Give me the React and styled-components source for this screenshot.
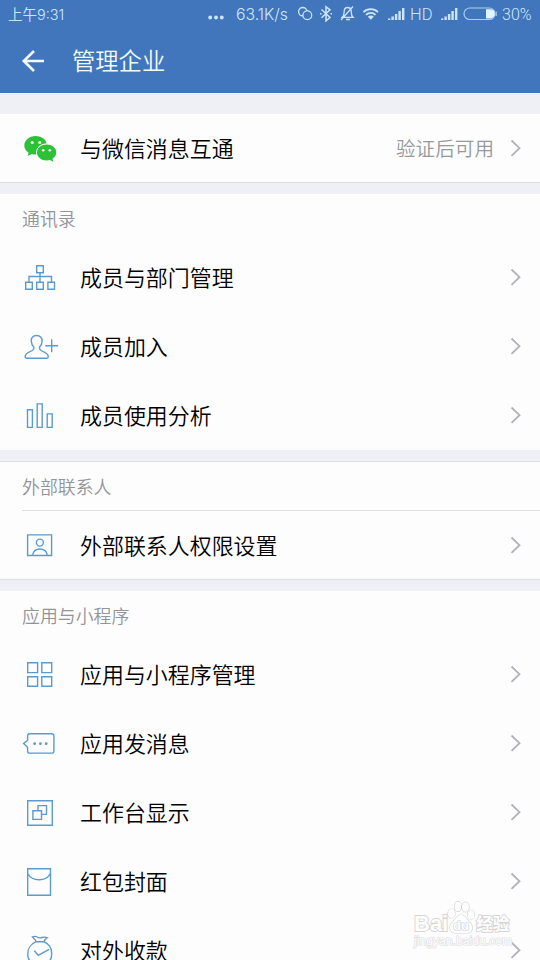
import React from 'react';
import styled, { createGlobalStyle } from 'styled-components';

const GlobalStyle = createGlobalStyle`
    * {
        box-sizing: border-box;
    }

    body {
        margin: 0;
        background: #eff0f5;
        font-family: 'Noto Sans CJK SC', sans-serif;
    }
`;

const Page = styled.div`
    position: relative;
    width: 540px;
    height: 960px;
    overflow: hidden;
    background: #eff0f5;
`;

const Header = styled.header`
    height: 93px;
    background: #4276bc;
`;

const StatusBar = styled.div`
    height: 28px;
    padding: 0 8px;
    display: flex;
    align-items: center;
    justify-content: space-between;
    color: #cbe6fb;
`;

const StatusText = styled.span`
    width: ${({ $width }) => $width}px;
    padding-left: ${({ $indent }) => $indent || 0}px;
    font-family: ${({ $font }) => $font || 'Roboto'}, 'Noto Sans CJK SC', sans-serif;
    font-size: ${({ $size }) => $size || 16}px;
    font-weight: 350;
    line-height: 29px;
    white-space: nowrap;
`;

const StatusIcons = styled.svg`
    display: block;
    flex: none;
`;

const StatusRight = styled.div`
    display: flex;
    align-items: center;
`;

const TitleBar = styled.div`
    height: 65px;
    padding-left: 20px;
    display: flex;
    align-items: center;
    color: #f2fbff;
`;

const Title = styled.h1`
    margin: 0 0 0 26px;
    font-size: 23.3px;
    font-weight: 350;
    line-height: 61px;
`;

const Section = styled.section`
    margin-top: ${({ $gap }) => $gap}px;
    background: #fdfdfe;
    box-shadow: ${({ $topLine }) => ($topLine ? '0 -1px 0 #dfe1e6' : 'none')};
`;

const SectionTitle = styled.h2`
    height: 49px;
    margin: 0 0 0 22px;
    border-bottom: 1px solid ${({ $line }) => ($line ? '#dcdde1' : 'transparent')};
    color: #929499;
    font-size: 17.9px;
    font-weight: 350;
    line-height: 49px;
`;

const RowWrapper = styled.div`
    height: 69px;
    padding: 0 16px 0 20px;
    display: flex;
    align-items: center;
    border-bottom: 1px solid ${({ $line }) => ($line ? '#dcdee3' : 'transparent')};
`;

const RowIcon = styled.svg`
    flex: none;
    margin-top: 1px;
    fill: none;
    stroke: #5b9bcf;
    stroke-width: 1.4;
`;

const RowLabel = styled.div`
    margin-left: 20px;
    color: #000;
    font-size: 21.95px;
    font-weight: 350;
    line-height: 64px;
    white-space: nowrap;
`;

const RowValue = styled.div`
    margin-left: auto;
    margin-right: 14px;
    color: #97999b;
    font-size: 19.6px;
    font-weight: 350;
    line-height: 64px;
`;

const Arrow = styled.svg`
    flex: none;
    margin-left: ${({ $push }) => ($push ? 'auto' : '0')};
    fill: none;
    stroke: #b1b2b7;
    stroke-width: 1.8;
`;

const Watermark = styled.div`
    position: absolute;
    left: 414px;
    top: 900px;
    width: 98px;
`;

const WatermarkBrand = styled.div`
    height: 34px;
    display: flex;
    align-items: flex-end;
    color: #fefefe;
    font-family: 'Liberation Sans', 'Noto Sans CJK SC', sans-serif;
    font-size: 22px;
    font-weight: 700;
    line-height: 20px;
    paint-order: stroke fill;
    -webkit-text-stroke: 1.8px #d4d4d5;
`;

const WatermarkPaw = styled.svg`
    flex: none;
    margin: 0 1px 0 -1px;
    font-family: 'Liberation Sans', sans-serif;
`;

const WatermarkCn = styled.span`
    font-size: 16.5px;
`;

const WatermarkUrl = styled.div`
    color: #fcfcfc;
    font-family: 'Liberation Sans', sans-serif;
    font-size: 12.2px;
    line-height: 15px;
    paint-order: stroke fill;
    -webkit-text-stroke: 1.2px #dededf;
`;

const icons = {
    wechat: (
        <g stroke="none">
            <path fill="#2dc137" d="M15.6 8C9.300 8 4.300 12.200 4.300 17.400c0 3 1.600 5.500 4.300 7.200L7.600 28l4-2.100c1.300.4 2.600.5 4 .5 6.300 0 11.400-4 11.400-9.100S21.900 8 15.600 8z" />
            <ellipse cx="26.700" cy="24.500" rx="10.700" ry="9.200" fill="#fdfdfe" />
            <path fill="#2dc137" d="M26.700 16.500c-5.400 0-9.700 3.500-9.700 8s4.300 8 9.700 8c1.200 0 2.300-.2 3.300-.5l3.400 2-.9-3.200c2.300-1.500 3.800-3.700 3.800-6.300 0-4.500-4.300-8-9.600-8z" />
            <g fill="#e9ffe5">
                <circle cx="12.200" cy="14.500" r="1.500" />
                <circle cx="19.700" cy="14.500" r="1.500" />
                <circle cx="23.200" cy="22.300" r="1.300" />
                <circle cx="29.800" cy="22.300" r="1.300" />
            </g>
        </g>
    ),
    org: (
        <path d="M16.700 8.700h6.600v7h-6.600zM20 15.700v9M9 25v-5.500h22.500V25M5.700 25.200h6.600v7H5.700zM16.700 25.200h6.600v7h-6.600zM27.900 25.200h6.600v7h-6.600z" />
    ),
    join: (
        <path d="M16.500 9.500c-3.400 0-5.400 2.300-5.200 5.600.1 2.500.9 4.600 2.500 5.900.5 2.300-.6 3.400-3.200 4.400-3.200 1.300-5.200 2.200-5.400 4.800-.1 1.400.5 2 1.700 2h19.700c1.200 0 1.800-.7 1.600-2-.4-2.600-2.300-3.500-5.400-4.800-2.600-1-3.700-2.100-3.200-4.400 1.600-1.300 2.400-3.400 2.500-5.900.1-3.300-2-5.600-5.600-5.600zM25.300 19.700H38.200M31.700 13.300v13" />
    ),
    chart: (
        <path d="M7.500 14.800h4.900v17.600H7.500zM17.200 8.900h5v23.500h-5zM27.200 18.900h5v13.500h-5z" />
    ),
    contact: (
        <g>
            <path d="M7.600 9.900h24v20.600h-24z" />
            <circle cx="19.900" cy="17.600" r="3.500" />
            <path d="M12.500 30.500c.6-4 3.500-6.500 7.400-6.500s6.900 2.500 7.500 6.500" />
        </g>
    ),
    apps: (
        <path d="M7.700 8.700h9.900v9.900H7.700zM21.800 8.700h9.900v9.900h-9.900zM7.700 22.700h9.900v9.600H7.700zM21.800 22.700h9.900v9.600h-9.900z" />
    ),
    message: (
        <g>
            <path d="M9.800 10.700h21.900a2.200 2.200 0 0 1 2.200 2.200v15a2.200 2.200 0 0 1-2.200 2.200H9.800a2.200 2.200 0 0 1-2.200-2.200v-3.600l-4-3.700 4-3.400v-4.300a2.200 2.200 0 0 1 2.200-2.200z" />
            <g fill="#5b9bcf" stroke="none">
                <circle cx="14.600" cy="20.700" r="1.400" />
                <circle cx="20.400" cy="20.700" r="1.400" />
                <circle cx="26.200" cy="20.700" r="1.400" />
            </g>
        </g>
    ),
    workbench: (
        <path d="M7.700 8.700h24.600v24.500H7.700zM18 18.500v-4.900h8.500v8.800h-4.800M12.900 18.800h8.600v8.600h-8.600z" />
    ),
    envelope: (
        <path d="M7.700 7.700h22.800v26.500H7.700zM7.700 12.500c2.200 4 6.200 6.200 11.400 6.200s9.200-2.200 11.400-6.200" />
    ),
    bag: (
        <path d="M16.200 11.700c-.9-2-2.200-3.500-3.700-4.700 1.600-.8 3.100-.9 4.600 0 1.600 1 3 1.100 4.800.5 1.800-.6 3.500-.5 5.300.1-1.600 1-2.700 2.200-3.400 4.100M16.200 11.700h7.600c4.800 2 7.900 6.800 7.900 12.300 0 7-4 10.500-12 10.500s-12-3.500-12-10.500c0-5.500 3.500-10.300 8.500-12.300zM14.300 20.800l3.900 4.600 11-6" />
    ),
};

const sections = [
    {
        id: 'wechat',
        gap: 21,
        rows: [{ icon: 'wechat', label: '与微信消息互通', value: '验证后可用', line: true }],
    },
    {
        id: 'members',
        gap: 11,
        title: '通讯录',
        rows: [
            { icon: 'org', label: '成员与部门管理' },
            { icon: 'join', label: '成员加入' },
            { icon: 'chart', label: '成员使用分析' },
        ],
    },
    {
        id: 'external',
        gap: 12,
        title: '外部联系人',
        topLine: true,
        titleLine: true,
        rows: [{ icon: 'contact', label: '外部联系人权限设置', line: true }],
    },
    {
        id: 'apps',
        gap: 11,
        title: '应用与小程序',
        rows: [
            { icon: 'apps', label: '应用与小程序管理' },
            { icon: 'message', label: '应用发消息' },
            { icon: 'workbench', label: '工作台显示' },
            { icon: 'envelope', label: '红包封面' },
            { icon: 'bag', label: '对外收款' },
        ],
    },
];

const SignalBars = () => (
    <StatusIcons width="18" height="28" viewBox="0 0 18 28" fill="currentColor">
        <path d="M0 18.500h2.300V20H0zM3.400 16.500h2.400V20H3.400zM6.900 14h2.400v6H6.900zM10.400 11h2.400v9h-2.400zM14 8h2.400v12H14z" />
    </StatusIcons>
);

const Status = () => (
    <StatusBar>
        <StatusText $font="Inter" $size={14.5}>上午9:31</StatusText>
        <StatusRight>
            <StatusIcons width="28" height="28" viewBox="0 0 28 28" fill="currentColor">
                <circle cx="2.200" cy="17.500" r="1.900" />
                <circle cx="8" cy="17.500" r="1.900" />
                <circle cx="13.800" cy="17.500" r="1.900" />
            </StatusIcons>
            <StatusText $font="Inter" $width={61} $size={15.8}>63.1K/s</StatusText>
            <StatusIcons width="91" height="28" viewBox="297 0 91 28" fill="none" stroke="currentColor" strokeWidth="1.3">
                <circle cx="302.800" cy="11.700" r="4.200" />
                <circle cx="307.300" cy="15.200" r="4.400" fill="#4276bc" />
                <path d="M321.500 9.500l8.500 8-4 3.300V6.700l4 3.200-8.500 7.800M320 13.700h1.500M330.500 13.700h1.500" strokeWidth="1.500" />
                <path d="M342.300 17.300c1.600-1.300 1.800-3 1.800-5 0-3 1-4.800 3.500-4.800s3.700 1.800 3.700 4.800c0 2 .2 3.700 1.700 5zM346 19.500h4M341 20L353 6.500" />
                <path d="M363.500 12.200c4-4 10.500-4 14.500 0M366 14.800c2.700-2.700 6.800-2.700 9.500 0" strokeWidth="1.800" />
                <path d="M367.800 16.800c1.800-1.600 4.200-1.600 6 0l-3 3z" fill="currentColor" stroke="none" />
            </StatusIcons>
            <SignalBars />
            <StatusText $width={35} $indent={4} $size={16.500}>HD</StatusText>
            <SignalBars />
            <StatusIcons width="43" height="28" viewBox="460 0 43 28" fill="none" stroke="#a9cdf0" strokeWidth="1.2">
                <rect x="465" y="8" width="31" height="11.500" rx="5.700" />
                <path d="M487 9.200h4.200a4.600 4.600 0 0 1 0 9.200H487z" fill="#e2f4ff" stroke="none" />
                <path d="M497.200 11.500v4.500" />
            </StatusIcons>
            <StatusText $width={30} $size={16}>30%</StatusText>
        </StatusRight>
    </StatusBar>
);

const Row = ({ icon, label, value, line }) => (
    <RowWrapper $line={line}>
        <RowIcon width="40" height="41" viewBox="0 0 40 41">
            {icons[icon]}
        </RowIcon>
        <RowLabel>{label}</RowLabel>
        {value && <RowValue>{value}</RowValue>}
        <Arrow $push={!value} width="16" height="20" viewBox="0 0 16 20">
            <path d="M3.500 2.500l8 7.700-8 7.700" />
        </Arrow>
    </RowWrapper>
);

const App = () => {
    return (
        <Page>
            <GlobalStyle />
            <Header>
                <Status />
                <TitleBar>
                    <svg width="26" height="26" viewBox="0 0 26 26" fill="none" stroke="currentColor" strokeWidth="2.600">
                        <path d="M14 3L3.800 13 14 23M4 13h20" />
                    </svg>
                    <Title>管理企业</Title>
                </TitleBar>
            </Header>
            {sections.map(({ id, gap, title, topLine, titleLine, rows }) => (
                <Section key={id} $gap={gap} $topLine={topLine}>
                    {title && <SectionTitle $line={titleLine}>{title}</SectionTitle>}
                    {rows.map((row) => (
                        <Row key={row.label} {...row} />
                    ))}
                </Section>
            ))}
            <Watermark>
                <WatermarkBrand>
                    Bai
                    <WatermarkPaw width="28" height="34" viewBox="0 0 28 34" fill="#fefefe" stroke="#d0d0d1" strokeWidth="1.2">
                        <ellipse cx="4.500" cy="13.500" rx="3.500" ry="4.500" />
                        <ellipse cx="11" cy="6.500" rx="3.500" ry="4.800" />
                        <ellipse cx="18.500" cy="7" rx="3.500" ry="4.800" />
                        <ellipse cx="24" cy="14.500" rx="3.500" ry="4.500" />
                        <path d="M14 15c-3 0-4.500 2.500-6.500 5-2.500 2.500-5 4.500-4.500 8 .5 3.500 3 5 6 5h11c3 0 5-1.500 5.300-5 .2-3.500-2.300-5.500-4.800-8-2-2.500-3.500-5-6.500-5z" />
                        <text x="6" y="30" fontSize="13" fontWeight="700">du</text>
                    </WatermarkPaw>
                    <WatermarkCn>经验</WatermarkCn>
                </WatermarkBrand>
                <WatermarkUrl>jingyan.baidu.com</WatermarkUrl>
            </Watermark>
        </Page>
    );
};

export default App;
